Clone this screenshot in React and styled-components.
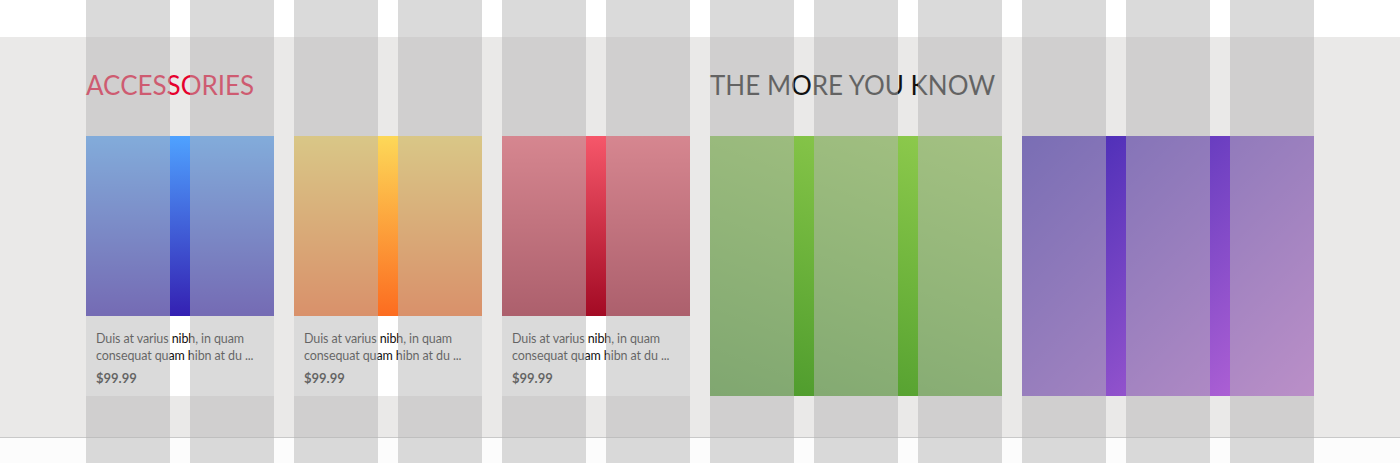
import React from 'react';
import styled, { createGlobalStyle } from 'styled-components';

const products = [
    { id: 1, from: '#4fa2ff', to: '#3420b2' },
    { id: 2, from: '#fdd858', to: '#fc6c20' },
    { id: 3, from: '#f6576a', to: '#a30a24' },
];

const App = () => {
    return (
        <Pagina>
            <GlobalStyle />
            <Cabecera />
            <Seccion>
                <Contenedor>
                    <Grupo>
                        <Titulo $color="#e6002c">Accessories</Titulo>
                        <Productos>
                            {products.map((p) => (
                                <Tarjeta key={p.id}>
                                    <Imagen $from={p.from} $to={p.to} />
                                    <Info>
                                        <Descripcion>Duis at varius nibh, in quam consequat quam hibn at du ...</Descripcion>
                                        <Precio>$99.99</Precio>
                                    </Info>
                                </Tarjeta>
                            ))}
                        </Productos>
                    </Grupo>

                    <Grupo>
                        <Titulo $color="#111">The more you know</Titulo>
                        <Mosaicos>
                            <Mosaico $bg="linear-gradient(20deg, #4a982b 0%, #6eb43c 50%, #92cd4f 100%)" />
                            <Mosaico $bg="linear-gradient(135deg, #3d26b3 0%, #7d48c6 50%, #c069da 100%)" />
                        </Mosaicos>
                    </Grupo>
                </Contenedor>
            </Seccion>
            <Pie />

            <Rejilla>
                {Array.from({ length: 12 }).map((_, i) => (
                    <Columna key={i} />
                ))}
            </Rejilla>
        </Pagina>
    );
}


const GlobalStyle = createGlobalStyle`
    html, body {
        margin: 0;
        padding: 0;
        background: #fff;
    }
    body {
        font-family: Lato, "Open Sans", Arial, sans-serif;
    }
    * {
        box-sizing: border-box;
    }
`;

const Pagina = styled.div`
    min-height: 100vh;
    display: flex;
    flex-direction: column;
`;

const Cabecera = styled.header`
    height: 37px;
    background: #fff;
`;

const Seccion = styled.section`
    background: #eae9e8;
    padding: 33px 0 41px;
    border-bottom: 1px solid #c9c9c9;
`;

const Contenedor = styled.div`
    width: 1228px;
    margin: 0 auto;
    display: grid;
    grid-template-columns: repeat(2, 604px);
    column-gap: 20px;
`;

const Grupo = styled.div`
    display: flex;
    flex-direction: column;
`;

const Titulo = styled.h2`
    margin: 0 0 35px;
    font-family: Lato, sans-serif;
    font-weight: 400;
    font-size: 26px;
    line-height: 31px;
    text-transform: uppercase;
    color: ${(props) => props.$color};
`;

const Productos = styled.div`
    display: grid;
    grid-template-columns: repeat(3, 188px);
    gap: 20px;
`;

const Tarjeta = styled.article`
    background: #fff;
    height: 260px;
    display: flex;
    flex-direction: column;
    overflow: hidden;
`;

const Imagen = styled.div`
    flex: none;
    height: 180px;
    background: linear-gradient(to bottom, ${(props) => props.$from}, ${(props) => props.$to});
`;

const Info = styled.div`
    padding: 14px 10px 0;
    color: #111;
    font-size: 12.5px;
    line-height: 17px;
    letter-spacing: -0.1px;
`;

const Descripcion = styled.p`
    margin: 0 0 6px;
`;

const Precio = styled.p`
    margin: 0;
    font-size: 13px;
    font-weight: 700;
    letter-spacing: 0;
`;

const Mosaicos = styled.div`
    display: grid;
    grid-template-columns: repeat(2, 292px);
    gap: 20px;
`;

const Mosaico = styled.div`
    height: 260px;
    background: ${(props) => props.$bg};
`;

const Pie = styled.footer`
    flex: 1;
    background: #fcfcfc;
`;

const Rejilla = styled.div`
    position: fixed;
    top: 0;
    bottom: 0;
    left: 50%;
    transform: translateX(-50%);
    width: 1228px;
    display: grid;
    grid-template-columns: repeat(12, 84px);
    column-gap: 20px;
    pointer-events: none;
`;

const Columna = styled.div`
    background: rgba(182, 182, 182, 0.5);
`;

export default App;
